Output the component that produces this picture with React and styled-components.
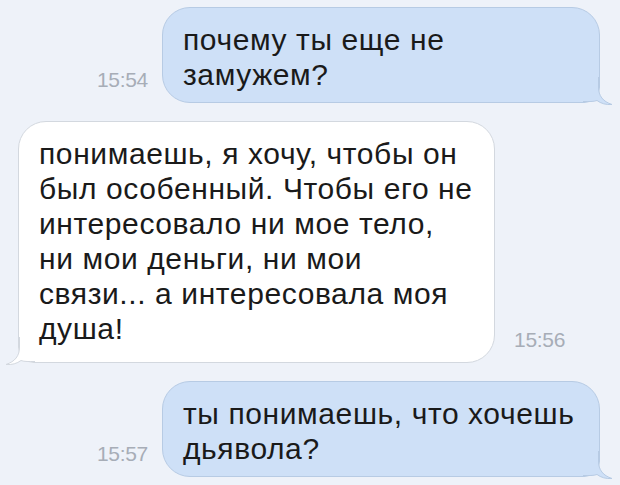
import styled, { createGlobalStyle } from "styled-components";

const GlobalStyle = createGlobalStyle`
  html, body {
    margin: 0;
    padding: 0;
    background: #eef2f9;
  }
  body {
    font-family: "Liberation Sans", Arial, sans-serif;
  }
`;

const Chat = styled.div`
  width: 620px;
  height: 485px;
  box-sizing: border-box;
  padding: 7px 20px 0 18px;
  display: flex;
  flex-direction: column;
  gap: 18px;
  background: #eef2f9;
  overflow: hidden;
`;

const Row = styled.div`
  display: flex;
  align-items: flex-end;
  justify-content: ${(props) => (props.$out ? "flex-end" : "flex-start")};
  gap: ${(props) => (props.$out ? "14px" : "19px")};
`;

const Time = styled.span`
  font-size: 21px;
  color: #a7adb7;
  margin-bottom: 11px;
  letter-spacing: -0.3px;
`;

const Bubble = styled.div`
  position: relative;
  box-sizing: border-box;
  width: ${(props) => props.$width}px;
  padding: ${(props) => (props.$out ? "14px 20px 10px" : "14px 20px 16px")};
  background: ${(props) => (props.$out ? "#cee0f7" : "#ffffff")};
  border: 1px solid ${(props) => (props.$out ? "#b7cbe4" : "#d3d8df")};
  border-radius: 28px;
  ${(props) =>
    props.$out
      ? "border-bottom-right-radius: 16px;"
      : "border-bottom-left-radius: 16px;"}
  color: #1a1a1a;
  font-size: 30px;
  line-height: 35px;
  letter-spacing: 0.6px;
  white-space: nowrap;
`;

const Tail = styled.svg`
  position: absolute;
  bottom: -3px;
  width: 34px;
  height: 28px;
  overflow: visible;
  ${(props) =>
    props.$out
      ? "right: -14px;"
      : "left: -14px; transform: scaleX(-1);"}
`;

const BubbleTail = ({ out }) => (
  <Tail $out={out} viewBox="0 0 34 28">
    <path
      d="M19.5 0 L19.5 10 C19.5 19 24 24.5 33 27.5 C27 28 22 26.5 18 23.5 C14.5 24.8 10 24.5 4 24.5"
      fill={out ? "#cee0f7" : "#ffffff"}
      stroke={out ? "#b7cbe4" : "#d3d8df"}
      strokeWidth="1"
    />
  </Tail>
);

const Message = ({ out, time, width, children }) => (
  <Row $out={out}>
    {out && <Time>{time}</Time>}
    <Bubble $out={out} $width={width}>
      {children}
      <BubbleTail out={out} />
    </Bubble>
    {!out && <Time>{time}</Time>}
  </Row>
);

export default function App() {
  return (
    <>
      <GlobalStyle />
      <Chat>
        <Message out time="15:54" width={438}>
          почему ты еще не
          <br />
          замужем?
        </Message>
        <Message time="15:56" width={477}>
          понимаешь, я хочу, чтобы он
          <br />
          был особенный. Чтобы его не
          <br />
          интересовало ни мое тело,
          <br />
          ни мои деньги, ни мои
          <br />
          связи... а интересовала моя
          <br />
          душа!
        </Message>
        <Message out time="15:57" width={438}>
          ты понимаешь, что хочешь
          <br />
          дьявола?
        </Message>
      </Chat>
    </>
  );
}
